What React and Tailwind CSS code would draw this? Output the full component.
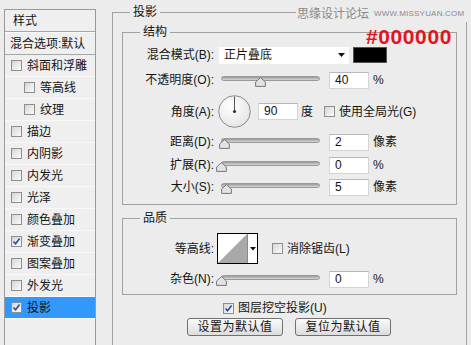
import React from "react";

const styles = [
  { label: "斜面和浮雕" },
  { label: "等高线", indent: true },
  { label: "纹理", indent: true },
  { label: "描边" },
  { label: "内阴影" },
  { label: "内发光" },
  { label: "光泽" },
  { label: "颜色叠加" },
  { label: "渐变叠加", checked: true },
  { label: "图案叠加" },
  { label: "外发光" },
  { label: "投影", checked: true, active: true },
];

function Check({ checked }) {
  return (
    <span className="relative inline-flex w-[11px] h-[11px] shrink-0 border border-[#8e8e8e] bg-gradient-to-br from-[#d6d6d6] to-[#fbfbfb]">
      {checked && (
        <svg className="absolute left-0 top-0" width="9" height="9" viewBox="0 0 9 9">
          <path d="M1.5 4.5 L3.6 6.8 L7.6 1.6" fill="none" stroke="#2b4f9e" strokeWidth="1.6" />
        </svg>
      )}
    </span>
  );
}

function Slider({ pos }) {
  return (
    <div className="relative w-[99px] h-[18px] shrink-0">
      <div className="absolute left-0 right-0 top-[5px] h-[5px] rounded-full border border-[#999] bg-gradient-to-b from-[#9a9a9a] to-[#d8d8d8]" />
      <svg className="absolute top-[6px]" style={{ left: pos }} width="11" height="10" viewBox="0 0 11 10">
        <path d="M5.5 0.6 L10.4 5 V9.4 H0.6 V5 Z" fill="#e2e2e2" stroke="#777" />
      </svg>
    </div>
  );
}

function Field({ value }) {
  return (
    <div className="w-[40px] h-[17px] shrink-0 bg-white border border-[#d4d4d4] border-t-[#b8b8b8] pl-[5px] text-[12px] leading-[15px] text-[#111]">
      {value}
    </div>
  );
}

function Label({ children }) {
  return <div className="w-[91px] shrink-0 text-right whitespace-nowrap">{children}</div>;
}

function SliderRow({ label, pos, value, unit, className }) {
  return (
    <div className={`flex items-center h-[18px] ${className}`}>
      <Label>{label}</Label>
      <div className="ml-[7px]">
        <Slider pos={pos} />
      </div>
      <div className="ml-[9px]">
        <Field value={value} />
      </div>
      <span className="ml-[4px]">{unit}</span>
    </div>
  );
}

function Dial() {
  return (
    <svg width="33" height="33" viewBox="0 0 33 33">
      <defs>
        <radialGradient id="dialg" cx="0.4" cy="0.35" r="0.7">
          <stop offset="0" stopColor="#ffffff" />
          <stop offset="1" stopColor="#e4e4e4" />
        </radialGradient>
      </defs>
      <circle cx="16.5" cy="16.5" r="15.8" fill="url(#dialg)" stroke="#8a8a8a" />
      <line x1="16.5" y1="16.5" x2="16.5" y2="1.5" stroke="#555" />
      <circle cx="16.5" cy="16.5" r="1.6" fill="#333" />
    </svg>
  );
}

function Contour() {
  return (
    <div className="flex w-[41px] h-[31px] border border-black bg-white shrink-0">
      <svg width="29" height="29" viewBox="0 0 29 29">
        <polygon points="0,29 29,0 29,29" fill="#a9a9a9" />
      </svg>
      <div className="flex-1 flex items-center justify-center border-l border-[#8a8a8a]">
        <svg width="6" height="4" viewBox="0 0 6 4">
          <polygon points="0,0 6,0 3,3.5" fill="#111" />
        </svg>
      </div>
    </div>
  );
}

function Button({ children }) {
  return (
    <div className="w-[96px] h-[18px] rounded-[3px] border border-[#707070] bg-gradient-to-b from-[#fbfbfb] to-[#dcdcdc] flex items-center justify-center text-[12px] tracking-[0.5px]">
      {children}
    </div>
  );
}

export default function App() {
  return (
    <div className="relative w-[471px] h-[345px] overflow-hidden bg-[#ececec] flex text-[12px] leading-[16px] text-[#141414] font-['Liberation_Sans','Noto_Sans_CJK_SC',sans-serif]">
      {/* left list */}
      <div className="ml-[4px] mt-[9px] w-[92px] h-[345px] shrink-0 border border-[#9a9a9a] bg-[#efefef] flex flex-col">
        <div className="h-[22px] flex items-center pl-[8px] border-b border-[#a6a6a6]">样式</div>
        <div className="h-[23px] flex items-center pl-[5px] border-t border-[#fafafa] border-b border-b-[#a6a6a6] whitespace-nowrap">
          混合选项:默认
        </div>
        {styles.map((s) => (
          <div
            key={s.label}
            className={`h-[22px] flex items-center border-b border-[#f9f9f9] ${
              s.indent ? "pl-[19px]" : "pl-[6px]"
            } ${s.active ? "bg-[#3398fb]" : ""}`}
          >
            <Check checked={s.checked} />
            <span className="ml-[5px] whitespace-nowrap">{s.label}</span>
          </div>
        ))}
      </div>

      {/* right panel */}
      <fieldset className="ml-[16px] mt-[4px] w-[355px] h-[360px] shrink-0 border border-[#a2a2a2]">
        <legend className="ml-[17px] px-[3px] leading-[16px]">投影</legend>

        <fieldset className="ml-[9px] mt-[4px] w-[335px] border border-[#a2a2a2] pt-[6px] pb-[8px]">
          <legend className="ml-[17px] px-[3px] leading-[16px]">结构</legend>

          <div className="flex items-center h-[18px]">
            <Label>混合模式(B):</Label>
            <div className="ml-[5px] w-[130px] h-[17px] bg-white flex items-center pl-[5px] pr-[4px]">
              <span className="flex-1">正片叠底</span>
              <svg width="7" height="4" viewBox="0 0 7 4">
                <polygon points="0,0 7,0 3.5,4" fill="#111" />
              </svg>
            </div>
            <div className="ml-[4px] w-[34px] h-[16px] bg-black border border-[#555]" />
          </div>

          <SliderRow className="mt-[7px]" label="不透明度(O):" pos={34} value="40" unit="%" />

          <div className="flex items-center h-[33px] mt-[6px]">
            <Label>角度(A):</Label>
            <div className="ml-[4px] flex">
              <Dial />
            </div>
            <div className="ml-[7px]">
              <Field value="90" />
            </div>
            <span className="ml-[3px]">度</span>
            <span className="ml-[11px] flex">
              <Check />
            </span>
            <span className="ml-[4px] whitespace-nowrap">使用全局光(G)</span>
          </div>

          <SliderRow className="mt-[5px]" label="距离(D):" pos={-2} value="2" unit="像素" />
          <SliderRow className="mt-[5px]" label="扩展(R):" pos={-5} value="0" unit="%" />
          <SliderRow className="mt-[4px]" label="大小(S):" pos={0} value="5" unit="像素" />
        </fieldset>

        <fieldset className="ml-[9px] mt-[5px] w-[335px] border border-[#a2a2a2] pt-[7px] pb-[6px]">
          <legend className="ml-[17px] px-[3px] leading-[16px]">品质</legend>
          <div className="flex items-center h-[31px]">
            <Label>等高线:</Label>
            <div className="ml-[3px]">
              <Contour />
            </div>
            <span className="ml-[14px] flex">
              <Check />
            </span>
            <span className="ml-[4px] whitespace-nowrap">消除锯齿(L)</span>
          </div>
          <SliderRow className="mt-[6px]" label="杂色(N):" pos={-5} value="0" unit="%" />
        </fieldset>

        <div className="flex items-center h-[16px] mt-[5px] pl-[110px]">
          <Check checked />
          <span className="ml-[4px] whitespace-nowrap">图层挖空投影(U)</span>
        </div>
        <div className="flex gap-[12px] mt-[2px] pl-[74px]">
          <Button>设置为默认值</Button>
          <Button>复位为默认值</Button>
        </div>
      </fieldset>

      {/* watermark overlays */}
      <div className="absolute left-[296px] top-[6px] flex items-center whitespace-nowrap bg-[#ececec] pl-[1px] pr-[4px] text-[#8a8a8a]">
        <span className="text-[12px] leading-[16px]">思缘设计论坛</span>
        <span className="ml-[5px] text-[8px] leading-[12px] tracking-[0.2px]">WWW.MISSYUAN.COM</span>
      </div>
      <div className="absolute left-[366px] top-[26px] whitespace-nowrap text-[21px] leading-[22px] font-bold tracking-[0.6px] text-[#e4141e]">
        #000000
      </div>
    </div>
  );
}
